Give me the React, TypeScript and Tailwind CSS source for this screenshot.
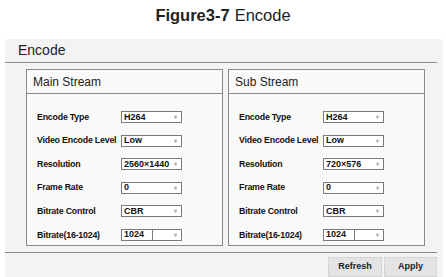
import React from 'react'

type Row = { label: string; value: string; split?: boolean }

const mainRows: Row[] = [
  { label: 'Encode Type', value: 'H264' },
  { label: 'Video Encode Level', value: 'Low' },
  { label: 'Resolution', value: '2560×1440' },
  { label: 'Frame Rate', value: '0' },
  { label: 'Bitrate Control', value: 'CBR' },
  { label: 'Bitrate(16-1024)', value: '1024', split: true },
]

const subRows: Row[] = [
  { label: 'Encode Type', value: 'H264' },
  { label: 'Video Encode Level', value: 'Low' },
  { label: 'Resolution', value: '720×576' },
  { label: 'Frame Rate', value: '0' },
  { label: 'Bitrate Control', value: 'CBR' },
  { label: 'Bitrate(16-1024)', value: '1024', split: true },
]

function Select({ value, split }: { value: string; split?: boolean }) {
  return (
    <div className="flex h-[12px] w-[61px] items-center border border-[#7a7a7a] bg-white text-[9px] font-bold leading-none text-[#111]">
      <span className={split ? 'flex h-full w-[31px] items-center border-r border-[#7a7a7a] pl-[2px]' : 'flex-1 pl-[2px]'}>
        {value}
      </span>
      {split && <span className="flex-1" />}
      <span className="pr-[4px] text-[6px] text-[#aaa]">▾</span>
    </div>
  )
}

function StreamBox({ title, rows }: { title: string; rows: Row[] }) {
  return (
    <div className="flex-1 border border-[#8a8a8a] bg-[#f9f9f9]">
      <div className="flex h-[24px] items-center border-b border-[#8a8a8a] pl-[6px] text-[12px] text-[#222]">
        {title}
      </div>
      <div className="flex flex-col gap-[11.6px] pt-[17px] pl-[10px]">
        {rows.map(r => (
          <div key={r.label} className="flex h-[12px] items-center">
            <span className="w-[84px] text-[8.8px] leading-none font-bold tracking-[-0.2px] text-[#111]">{r.label}</span>
            <Select value={r.value} split={r.split} />
          </div>
        ))}
      </div>
    </div>
  )
}

export default function App() {
  return (
    <div className="h-[277px] w-[446px] overflow-hidden bg-white" style={{ fontFamily: '"Liberation Sans", Arial, sans-serif' }}>
      {/* figure caption */}
      <div className="flex h-[39px] justify-center pt-[3px] text-[16.5px] text-[#222]">
        <span className="font-bold">Figure3-7</span>
        <span className="ml-[5px]">Encode</span>
      </div>

      <div className="ml-[5px] h-[238px] w-[438px] bg-[#f3f3f3] pr-[6px]">
        <div className="flex h-[24px] items-center border-b-[1.5px] border-[#8a8a8a] pl-[13px] text-[14px] text-[#222]">
          Encode
        </div>

        <div className="flex h-[183px] gap-[5px] pt-[6px] pl-[21px] pr-[12px]">
          <StreamBox title="Main Stream" rows={mainRows} />
          <StreamBox title="Sub Stream" rows={subRows} />
        </div>

        <div className="mt-[6px] border-t-[1.5px] border-[#8a8a8a]" />

        <div className="flex justify-end gap-[2px] pt-[4px]">
          <button className="h-[20px] w-[54px] border border-[#d4d4d4] bg-[#e4e4e4] text-[9px] font-bold text-[#222]">Refresh</button>
          <button className="h-[20px] w-[53px] border border-[#d4d4d4] bg-[#e4e4e4] text-[9px] font-bold text-[#222]">Apply</button>
        </div>
      </div>
    </div>
  )
}
